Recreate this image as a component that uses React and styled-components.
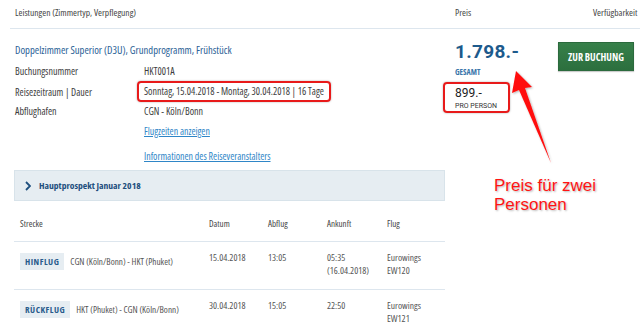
import React from "react";
import styled, { createGlobalStyle } from "styled-components";

const condensed = `"Open Sans", "Roboto Condensed", "Liberation Sans", sans-serif`;
const sans = `"Roboto", "Liberation Sans", sans-serif`;

const GlobalStyle = createGlobalStyle`
  html, body {
    margin: 0;
    padding: 0;
    background: #fff;
  }
  body {
    font-family: ${condensed};
    font-stretch: 75%;
    color: #3a3a3a;
    width: 640px;
    height: 329px;
    overflow: hidden;
  }
`;

const Page = styled.div`
  position: relative;
  width: 640px;
  height: 329px;
  overflow: hidden;
`;

const HeaderRow = styled.div`
  display: grid;
  grid-template-columns: 445px 138px 1fr;
  height: 29px;
  margin-left: 10px;
  border-bottom: 1px solid #dde6ee;
  align-items: center;
  font-size: 9.5px;
  color: #444;
  padding-bottom: 4px;
  box-sizing: border-box;
`;

const HeadCell = styled.div`
  padding-left: ${({ $pl }) => $pl || 0}px;
  text-align: ${({ $right }) => ($right ? "right" : "left")};
  padding-right: ${({ $right }) => ($right ? 6 : 0)}px;
`;

const Main = styled.div`
  display: grid;
  grid-template-columns: 431px 113px 1fr;
  padding-left: 14px;
`;

const Left = styled.div`
  display: flex;
  flex-direction: column;
`;

const Title = styled.div`
  margin: 14px 0 3px;
  height: 14px;
  line-height: 14px;
  padding-left: 1px;
  font-size: 10.6px;
  color: #2b6296;
`;

const InfoRow = styled.div`
  display: grid;
  grid-template-columns: 129px 1fr;
  align-items: center;
  height: ${({ $h }) => $h || 20}px;
  padding-left: 1px;
  font-size: 10px;
  color: #3d3d3d;
`;

const Highlight = styled.span`
  justify-self: start;
  margin-left: -7px;
  padding: 1px 5px 2px;
  border: 2px solid #e81a1a;
  border-radius: 4px;
  box-shadow: 0 0 2px rgba(0, 0, 0, 0.35);
`;

const LinkText = styled.a`
  color: #2f86c7;
  text-decoration: underline;
  text-underline-offset: 1px;
  font-size: 9.9px;
`;

const Prospekt = styled.div`
  display: flex;
  align-items: center;
  gap: 8px;
  height: 31px;
  box-sizing: border-box;
  background: #e6edf2;
  border: 1px solid #d8e3ea;
  padding-left: 10px;
  font-size: 9.6px;
  font-weight: bold;
  color: #1e4f7e;
`;

const Chevron = styled.svg`
  width: 6px;
  height: 10px;
`;

const columns = "189px 59px 59px 60px 1fr";

const TableHead = styled.div`
  display: grid;
  grid-template-columns: ${columns};
  align-items: center;
  height: 41px;
  padding: 4px 0 0 6px;
  box-sizing: border-box;
  border-bottom: 1px solid #dde6ee;
  font-size: 9px;
  color: #444;
`;

const FlightRow = styled.div`
  display: grid;
  grid-template-columns: ${columns};
  align-items: start;
  height: ${({ $h }) => $h}px;
  padding: 11px 0 0 6px;
  box-sizing: border-box;
  border-bottom: ${({ $last }) => ($last ? "none" : "1px solid #dde6ee")};
  font-size: 9.5px;
  color: #555;
`;

const Route = styled.div`
  display: flex;
  align-items: center;
  gap: 6px;
  font-size: 9.2px;
`;

const Badge = styled.span`
  display: inline-flex;
  align-items: center;
  height: 17px;
  padding: 0 5px;
  background: #e6edf2;
  color: #285b8c;
  font-weight: bold;
  font-size: 9px;
  letter-spacing: 0.5px;
`;

const Cell = styled.div`
  margin-top: -2px;
  line-height: 13px;
`;

const PriceCol = styled.div`
  display: flex;
  flex-direction: column;
  align-items: flex-start;
  padding-left: 10px;
  padding-top: 12px;
`;

const Total = styled.div`
  font-family: ${sans};
  font-stretch: normal;
  font-weight: bold;
  font-size: 19px;
  line-height: 22px;
  color: #1d5a8c;
  letter-spacing: 0.3px;
`;

const Gesamt = styled.div`
  font-weight: bold;
  font-size: 8px;
  color: #3a76aa;
  margin-top: 3px;
`;

const PerPerson = styled.div`
  margin-top: 5px;
  margin-left: -12px;
  width: 67px;
  height: 31px;
  box-sizing: border-box;
  border: 2px solid #e81a1a;
  border-radius: 4px;
  box-shadow: 0 0 2px rgba(0, 0, 0, 0.35);
  padding: 3px 0 0 10px;
  font-family: ${sans};
  font-stretch: normal;
  color: #222;
`;

const PerAmount = styled.div`
  font-size: 12px;
  line-height: 13px;
`;

const PerLabel = styled.div`
  font-size: 7px;
  margin-top: 2px;
  color: #333;
`;

const ButtonCol = styled.div`
  padding-top: 13px;
`;

const BookButton = styled.button`
  width: 76px;
  height: 29px;
  border: 1px solid #2b6a3d;
  background: linear-gradient(#37804a, #2c6f3e);
  color: #fff;
  font-family: ${condensed};
  font-stretch: 75%;
  font-weight: bold;
  font-size: 10px;
  padding: 0;
  box-shadow: 0 1px 1px rgba(0, 0, 0, 0.2);
`;

const Annotation = styled.div`
  position: absolute;
  left: 494px;
  top: 176px;
  font-family: "Liberation Sans", Arial, sans-serif;
  font-stretch: normal;
  font-size: 17px;
  line-height: 19px;
  color: #ff1414;
  text-shadow: 1px 1px 2px rgba(0, 0, 0, 0.3);
`;

const Arrow = styled.svg`
  position: absolute;
  left: 0;
  top: 0;
  width: 640px;
  height: 329px;
  pointer-events: none;
`;

const flights = [
  {
    dir: "HINFLUG",
    route: "CGN (Köln/Bonn) - HKT (Phuket)",
    date: "15.04.2018",
    dep: "13:05",
    arr: ["05:35", "(16.04.2018)"],
    flight: ["Eurowings", "EW120"],
    h: 48,
  },
  {
    dir: "RÜCKFLUG",
    route: "HKT (Phuket) - CGN (Köln/Bonn)",
    date: "30.04.2018",
    dep: "15:05",
    arr: ["22:50"],
    flight: ["Eurowings", "EW121"],
    h: 44,
    last: true,
  },
];

export default function App() {
  return (
    <>
      <GlobalStyle />
      <Page>
        <HeaderRow>
          <HeadCell $pl={5}>Leistungen (Zimmertyp, Verpflegung)</HeadCell>
          <HeadCell>Preis</HeadCell>
          <HeadCell $right>Verfügbarkeit</HeadCell>
        </HeaderRow>

        <Main>
          <Left>
            <Title>Doppelzimmer Superior (D3U), Grundprogramm, Frühstück</Title>
            <InfoRow $h={21}>
              <span>Buchungsnummer</span>
              <span>HKT001A</span>
            </InfoRow>
            <InfoRow>
              <span>Reisezeitraum | Dauer</span>
              <Highlight>Sonntag, 15.04.2018 - Montag, 30.04.2018 | 16 Tage</Highlight>
            </InfoRow>
            <InfoRow>
              <span>Abflughafen</span>
              <span>CGN - Köln/Bonn</span>
            </InfoRow>
            <InfoRow>
              <span />
              <span>
                <LinkText>Flugzeiten anzeigen</LinkText>
              </span>
            </InfoRow>
            <InfoRow $h={29}>
              <span />
              <span>
                <LinkText>Informationen des Reiseveranstalters</LinkText>
              </span>
            </InfoRow>

            <Prospekt>
              <Chevron viewBox="0 0 6 10">
                <path d="M1 1 L5 5 L1 9" fill="none" stroke="#1e4f7e" strokeWidth="1.8" />
              </Chevron>
              Hauptprospekt Januar 2018
            </Prospekt>

            <TableHead>
              <span>Strecke</span>
              <span>Datum</span>
              <span>Abflug</span>
              <span>Ankunft</span>
              <span>Flug</span>
            </TableHead>

            {flights.map((f) => (
              <FlightRow key={f.dir} $h={f.h} $last={f.last}>
                <Route>
                  <Badge>{f.dir}</Badge>
                  <span>{f.route}</span>
                </Route>
                <Cell>{f.date}</Cell>
                <Cell>{f.dep}</Cell>
                <Cell>
                  {f.arr.map((a) => (
                    <div key={a}>{a}</div>
                  ))}
                </Cell>
                <Cell>
                  {f.flight.map((a) => (
                    <div key={a}>{a}</div>
                  ))}
                </Cell>
              </FlightRow>
            ))}
          </Left>

          <PriceCol>
            <Total>1.798.-</Total>
            <Gesamt>GESAMT</Gesamt>
            <PerPerson>
              <PerAmount>899.-</PerAmount>
              <PerLabel>PRO PERSON</PerLabel>
            </PerPerson>
          </PriceCol>

          <ButtonCol>
            <BookButton>ZUR BUCHUNG</BookButton>
          </ButtonCol>
        </Main>

        <Arrow viewBox="0 0 640 329">
          <defs>
            <filter id="sh" x="-20%" y="-20%" width="140%" height="140%">
              <feDropShadow dx="1" dy="1" stdDeviation="1" floodColor="#000" floodOpacity="0.3" />
            </filter>
          </defs>
          <polygon
            points="516,71 532,87 525,88 551,163 519,90 512,93"
            fill="#ff1010"
            filter="url(#sh)"
          />
        </Arrow>
        <Annotation>
          Preis für zwei
          <br />
          Personen
        </Annotation>
      </Page>
    </>
  );
}
